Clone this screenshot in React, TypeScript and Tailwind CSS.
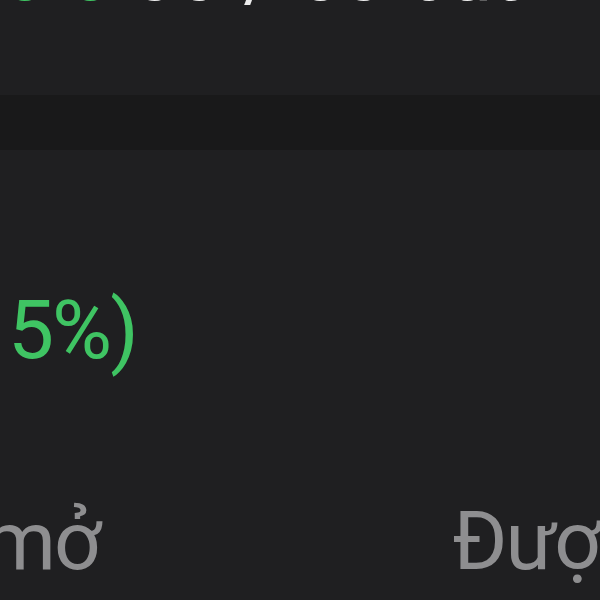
export default function App() {
  return (
    <div
      className="w-[600px] h-[600px] overflow-hidden bg-[#1f1f21] flex flex-col"
      style={{ fontFamily: 'Roboto, "Noto Sans", sans-serif' }}
    >
      {/* Top line, cut off at the top edge */}
      <div className="h-[95px] overflow-hidden relative">
        <div className="-mt-[64px] pl-[2px] text-[76px] leading-none whitespace-nowrap text-[#ececec] tracking-[2px]">
          <span className="text-[#3fc463]">5 5</span> 00 / 50 câu hỏi
        </div>
      </div>

      {/* Divider band */}
      <div className="h-[55px] bg-[#19191a]" />

      {/* Percentage */}
      <div className="h-[330px] pt-[139px]">
        <div className="pl-[8px] text-[82px] leading-none text-[#3fc463] whitespace-nowrap tracking-[-2px]">5%)</div>
      </div>

      {/* Bottom labels */}
      <div className="flex-1 pt-[20px] flex items-start justify-between whitespace-nowrap text-[82px] leading-none text-[#8e8e90] tracking-[-2px]">
        <div className="-ml-[16px]">mở</div>
        <div className="-mr-[40px]">Được</div>
      </div>
    </div>
  )
}
